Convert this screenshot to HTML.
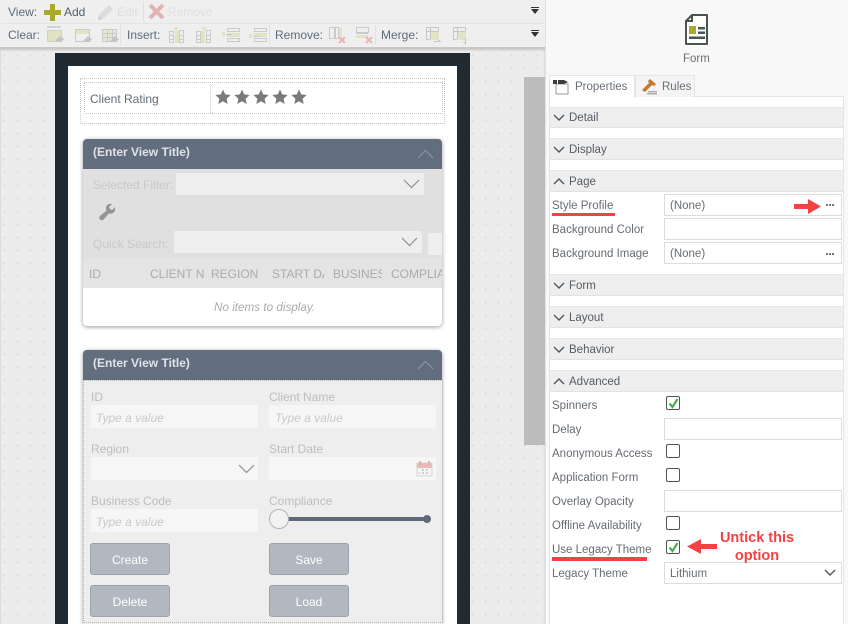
<!DOCTYPE html>
<html><head><meta charset="utf-8">
<style>
html,body{margin:0;padding:0;background:#f8f8f8}
#r{position:relative;width:848px;height:624px;overflow:hidden;font-family:"Liberation Sans",sans-serif;font-size:11.5px;color:#5e6670;background:#f8f8f8}
#r div,#r span.a,#r svg{position:absolute}
.t{white-space:nowrap;line-height:14px}
.sh{left:550px;width:293px;height:20px;background:#eeeeee;border-bottom:1px solid #e2e2e2;border-top:1px solid #e8e8e8}
.sl{left:569px;font-weight:normal;color:#555c64;font-size:11.5px}
.lab{left:552px;color:#666c73}
.inp{left:664px;width:176px;height:20px;background:#fff;border:1px solid #dcdcdc}
.cb{left:666px;width:12px;height:12px;border:1px solid #4f5558;border-radius:2px;background:#fff}
.gi{background:#f6f6f6;height:23px;width:167px}
.btn{width:78px;height:30px;background:#b2b8c0;border:1px solid #9ca3ad;border-radius:3px;color:#fff;text-align:center;line-height:33px;font-size:12px}
.fl{color:#bdbdbd;font-size:12px}
.ph{color:#c9c9c9;font-style:italic;font-size:12px}
.ch{color:#a8abaf;font-size:12px}
</style></head><body><div id="r">

<!-- toolbar -->
<div style="left:0;top:0;width:546px;height:47px;background:#efefef"></div>
<div style="left:2px;top:23px;width:544px;height:1px;background:#e4e4e4"></div>
<div class="t" style="left:8px;top:5px;color:#5b6b7c;font-size:12px">View:</div>
<svg style="left:44px;top:4px" width="17" height="17"><path d="M6 0h5v6h6v5h-6v6H6v-6H0V6h6z" fill="#a9a92c"/></svg>
<div class="t" style="left:64px;top:5px;color:#55606b;font-size:12px">Add</div>
<svg style="left:97px;top:4px" width="17" height="17"><path d="M1 16l1-5L12 1l4 4L6 15z" fill="#dcdcdc"/><path d="M1 16l1-4 3 3z" fill="#c8c8c8"/></svg>
<div class="t" style="left:117px;top:5px;color:#dedede;font-size:12px">Edit</div>
<div style="left:143px;top:2px;width:1px;height:20px;background:#e0e0e0"></div>
<svg style="left:148px;top:3px" width="17" height="17"><path d="M2 2l13 13M15 2L2 15" stroke="#e4b3b3" stroke-width="4"/></svg>
<div class="t" style="left:168px;top:5px;color:#e0e0e0;font-size:12px">Remove</div>
<svg style="left:530px;top:7px" width="11" height="8"><path d="M1 0h8v1H1zM1 2h8L5 7z" fill="#333"/></svg>
<svg style="left:530px;top:30px" width="11" height="8"><path d="M1 0h8v1H1zM1 2h8L5 7z" fill="#333"/></svg>

<div class="t" style="left:8px;top:28px;color:#5b6b7c;font-size:12px">Clear:</div>
<div class="t" style="left:127px;top:28px;color:#5b6b7c;font-size:12px">Insert:</div>
<div class="t" style="left:275px;top:28px;color:#5b6b7c;font-size:12px">Remove:</div>
<div class="t" style="left:381px;top:28px;color:#5b6b7c;font-size:12px">Merge:</div>
<div style="left:120px;top:25px;width:1px;height:20px;background:#e0e0e0"></div>
<div style="left:269px;top:25px;width:1px;height:20px;background:#e0e0e0"></div>
<div style="left:375px;top:25px;width:1px;height:20px;background:#e0e0e0"></div>

<svg style="left:46px;top:26px" width="370" height="19" fill="none">
<g><path d="M1 1h14" stroke="#d2d2d2" stroke-width="2"/><rect x="1.500" y="4.500" width="14" height="11" fill="#e2e2c4" stroke="#cfcfcf"/><path d="M9 15l5-5 4 3-3 3z" fill="#c4c4c4"/></g>
<g transform="translate(28)"><rect x="1.500" y="3.500" width="14" height="12" stroke="#cacaca" fill="#efefef"/><rect x="2" y="4" width="13" height="4" fill="#e2e2c4"/><path d="M9 15l5-5 4 3-3 3z" fill="#c4c4c4"/></g>
<g transform="translate(55)"><rect x="1.500" y="3.500" width="14" height="12" stroke="#cacaca" fill="#e8e8d0"/><path d="M1 7.500h14M1 11.500h14M6.500 3v12M11.500 3v12" stroke="#cacaca"/><path d="M9 15l5-5 4 3-3 3z" fill="#c4c4c4"/></g>
<g transform="translate(122)" stroke="#cacaca"><rect x="1.500" y="5.500" width="4" height="11" fill="#efefef"/><rect x="11.500" y="4.500" width="4" height="12" fill="#efefef"/><rect x="7" y="5" width="4" height="12" fill="#e2e2c4" stroke="none"/><rect x="6" y="1" width="4" height="3" fill="#e2e2c4" stroke="none"/><path d="M1 9.500h4M1 13.500h4M11 9.500h4M11 13.500h4"/></g>
<g transform="translate(149)" stroke="#cacaca"><rect x="1.500" y="5.500" width="4" height="11" fill="#efefef"/><rect x="11.500" y="4.500" width="4" height="12" fill="#efefef"/><rect x="6" y="5" width="4" height="12" fill="#e2e2c4" stroke="none"/><rect x="7" y="1" width="4" height="3" fill="#e2e2c4" stroke="none"/><path d="M1 9.500h4M1 13.500h4M11 9.500h4M11 13.500h4"/></g>
<g transform="translate(176)" stroke="#cacaca"><rect x="5.500" y="2.500" width="12" height="3" fill="#efefef"/><rect x="5.500" y="12.500" width="12" height="3" fill="#efefef"/><rect x="5" y="7" width="13" height="4" fill="#e2e2c4" stroke="none"/><rect x="0" y="6" width="3" height="4" fill="#e2e2c4" stroke="none"/><path d="M4 8.500h6"/></g>
<g transform="translate(203)" stroke="#cacaca"><rect x="5.500" y="2.500" width="12" height="3" fill="#efefef"/><rect x="5.500" y="12.500" width="12" height="3" fill="#efefef"/><rect x="5" y="7" width="13" height="4" fill="#e2e2c4" stroke="none"/><rect x="0" y="8" width="3" height="4" fill="#e2e2c4" stroke="none"/><path d="M4 10.500h6"/></g>
<g transform="translate(282)" stroke="#cacaca"><rect x="1.500" y="1.500" width="5" height="11" fill="#efefef"/><rect x="7.500" y="1.500" width="3" height="11" fill="#efefef"/><rect x="11" y="1" width="3" height="11" fill="#e2e2c4" stroke="none"/><path d="M11 11l6 6M17 11l-6 6" stroke="#eab4b4" stroke-width="2"/></g>
<g transform="translate(309)" stroke="#cacaca"><rect x="1.500" y="1.500" width="12" height="5" fill="#efefef"/><rect x="1" y="9" width="12" height="3" fill="#e2e2c4" stroke="none"/><path d="M1 7.500h12"/><path d="M11 11l6 6M17 11l-6 6" stroke="#eab4b4" stroke-width="2"/></g>
</svg>
<svg style="left:425px;top:26px" width="45" height="19" fill="none" stroke="#c6c6c6">
<rect x="1.500" y="1.500" width="12" height="12" fill="#efefef"/><rect x="5" y="5" width="9" height="9" fill="#e2e2c4" stroke="none"/><path d="M1 5.500h12M5.500 1v12"/><path d="M9 15.500h6l-2-2"/>
<rect x="28.500" y="1.500" width="12" height="12" fill="#efefef"/><rect x="32" y="5" width="9" height="9" fill="#e2e2c4" stroke="none"/><path d="M28 5.500h12M32.500 1v12"/><path d="M40.500 12v6l-2-2"/>
</svg>

<!-- canvas -->
<div id="cv" style="left:0;top:47px;width:545px;height:577px;background-color:#ececec;background-image:radial-gradient(circle,#dadada .8px,transparent 1px);background-size:13px 13px;background-position:-2px 1px;border-top:1px solid #c8c8c8;box-shadow:inset 0 2px 2px #c4c4c4"></div>
<div style="left:545px;top:0;width:1px;height:624px;background:#e2e2e2"></div>
<div style="left:524px;top:77px;width:21px;height:368px;background:#bcbcbc"></div>
<div style="left:55px;top:53px;width:415px;height:571px;background:#212b33"></div>
<div style="left:68px;top:66px;width:389px;height:558px;background:#fff"></div>

<!-- rating -->
<div style="left:80px;top:78px;width:363px;height:44px;border:1px dotted #c4c4c4"></div>
<div style="left:84px;top:82px;width:357px;height:30px;border:1px dotted #c4c4c4"></div>
<div style="left:210px;top:82px;width:0;height:31px;border-left:1px dotted #c4c4c4"></div>
<div class="t" style="left:90px;top:92px;color:#5f6c79;font-size:12px">Client Rating</div>
<svg style="left:215px;top:89px" width="95" height="16" fill="#7a7a7a">
<path d="M8 .5L10.200 5.400 15.600 6 11.600 9.700 12.700 15 8 12.300 3.300 15 4.400 9.700 .4 6 5.800 5.400z"/>
<path transform="translate(19)" d="M8 .5L10.200 5.400 15.600 6 11.600 9.700 12.700 15 8 12.300 3.300 15 4.400 9.700 .4 6 5.800 5.400z"/>
<path transform="translate(38)" d="M8 .5L10.200 5.400 15.600 6 11.600 9.700 12.700 15 8 12.300 3.300 15 4.400 9.700 .4 6 5.800 5.400z"/>
<path transform="translate(57)" d="M8 .5L10.200 5.400 15.600 6 11.600 9.700 12.700 15 8 12.300 3.300 15 4.400 9.700 .4 6 5.800 5.400z"/>
<path transform="translate(76)" d="M8 .5L10.200 5.400 15.600 6 11.600 9.700 12.700 15 8 12.300 3.300 15 4.400 9.700 .4 6 5.800 5.400z"/>
</svg>

<!-- view 1 -->
<div style="left:83px;top:139px;width:359px;height:187px;background:#fff;border-radius:4px;box-shadow:0 1px 4px rgba(0,0,0,.4)"></div>
<div style="left:83px;top:139px;width:359px;height:30px;background:#626d7e;border-radius:4px 4px 0 0"></div>
<div class="t" style="left:93px;top:145px;color:#dfe3e8;font-size:12px;font-weight:bold">(Enter View Title)</div>
<svg style="left:417px;top:148px" width="17" height="12" fill="none"><path d="M1 10l7.500-7.500L16 10" stroke="#8c95a2" stroke-width="1.200"/></svg>
<div style="left:83px;top:169px;width:359px;height:119px;background:#e0e0e0"></div>
<div style="left:83px;top:258px;width:359px;height:30px;background:#e4e4e4"></div>
<div class="t" style="left:93px;top:178px;color:#c9c9c9;font-size:12px;font-weight:normal">Selected Filter:</div>
<div style="left:176px;top:173px;width:248px;height:22px;background:#eeeeee"></div>
<svg style="left:403px;top:178px" width="17" height="12" fill="none"><path d="M1 2l7.500 7.500L16 2" stroke="#8f8f8f" stroke-width="1.200"/></svg>
<svg style="left:99px;top:204px" width="17" height="17"><path d="M16 3l-3 3-2-1-1-2 3-3c-3-1-6 1-6 4 0 1 0 1.500.5 2.500L1 12c-1 1-1 2.500 0 3.500s2.500 1 3.500 0L10 9.500c3 1 7-1 6-6.500z" fill="#949494"/></svg>
<div class="t" style="left:93px;top:237px;color:#c9c9c9;font-size:12px">Quick Search:</div>
<div style="left:174px;top:231px;width:248px;height:22px;background:#eeeeee"></div>
<svg style="left:401px;top:236px" width="17" height="12" fill="none"><path d="M1 2l7.500 7.500L16 2" stroke="#8f8f8f" stroke-width="1.200"/></svg>
<div style="left:428px;top:233px;width:14px;height:22px;background:#eeeeee"></div>
<div class="t ch" style="left:89px;top:267px">ID</div>
<div class="t ch" style="left:150px;top:267px;width:54px;overflow:hidden">CLIENT NAME</div>
<div class="t ch" style="left:211px;top:267px">REGION</div>
<div class="t ch" style="left:272px;top:267px;width:52px;overflow:hidden">START DATE</div>
<div class="t ch" style="left:333px;top:267px;width:49px;overflow:hidden">BUSINESS</div>
<div class="t ch" style="left:391px;top:267px;width:51px;overflow:hidden">COMPLIANCE</div>
<div class="t" style="left:214px;top:301px;color:#aaa;font-style:italic;font-size:11.700px">No items to display.</div>

<!-- view 2 -->
<div style="left:83px;top:350px;width:359px;height:274px;background:#eeeeee;box-shadow:0 1px 4px rgba(0,0,0,.4);border-radius:4px 4px 0 0"></div>
<div style="left:83px;top:350px;width:359px;height:30px;background:#626d7e;border-radius:4px 4px 0 0"></div>
<div style="left:83px;top:380px;width:358px;height:241px;border:1px dotted #b4b4b4"></div>
<div class="t" style="left:93px;top:356px;color:#dfe3e8;font-size:12px;font-weight:bold">(Enter View Title)</div>
<svg style="left:417px;top:359px" width="17" height="12" fill="none"><path d="M1 10l7.500-7.500L16 10" stroke="#8c95a2" stroke-width="1.200"/></svg>

<div class="t fl" style="left:91px;top:390px">ID</div>
<div class="t fl" style="left:269px;top:390px">Client Name</div>
<div class="gi" style="left:91px;top:405px"></div>
<div class="gi" style="left:269px;top:405px"></div>
<div class="t ph" style="left:96px;top:411px">Type a value</div>
<div class="t ph" style="left:275px;top:411px">Type a value</div>
<div class="t fl" style="left:91px;top:442px">Region</div>
<div class="t fl" style="left:269px;top:442px">Start Date</div>
<div class="gi" style="left:91px;top:457px"></div>
<div class="gi" style="left:269px;top:457px"></div>
<svg style="left:238px;top:463px" width="17" height="12" fill="none"><path d="M1 2l7.500 7.500L16 2" stroke="#8f8f8f" stroke-width="1.200"/></svg>
<svg style="left:416px;top:460px" width="17" height="17"><rect x="1" y="3" width="15" height="13" fill="#f4f4f4" stroke="#d5d5d5"/><rect x="1" y="3" width="15" height="5" fill="#e9bcbc"/><path d="M4 1v4M13 1v4" stroke="#d9a8a8" stroke-width="1.500"/><path d="M6 10h2M10 10h2M6 13h2M10 13h2M3 13h1" stroke="#aaa"/></svg>
<div class="t fl" style="left:91px;top:494px">Business Code</div>
<div class="t fl" style="left:269px;top:494px">Compliance</div>
<div class="gi" style="left:91px;top:509px"></div>
<div class="t ph" style="left:96px;top:515px">Type a value</div>
<div style="left:280px;top:517px;width:147px;height:4px;background:#5e6a7b;border-radius:2px"></div>
<div style="left:423px;top:515px;width:8px;height:8px;background:#5e6a7b;border-radius:50%"></div>
<div style="left:269px;top:509px;width:18px;height:18px;border-radius:50%;background:#f2f2f2;border:1px solid #b4b4b4"></div>
<div class="btn" style="left:90px;top:543px">Create</div>
<div class="btn" style="left:269px;top:543px">Save</div>
<div class="btn" style="left:90px;top:585px">Delete</div>
<div class="btn" style="left:269px;top:585px">Load</div>

<!-- right panel -->
<svg style="left:684px;top:14px" width="25" height="31"><path d="M8 1h15v29H2V7z" fill="#fff" stroke="#4a5356" stroke-width="2" stroke-linejoin="round"/><path d="M8 1v6H2" fill="none" stroke="#4a5356" stroke-width="2"/><rect x="5" y="12" width="7" height="8" fill="#a9a92c"/><path d="M14 13h7v2.500h-7zM14 17.500h7V20h-7zM5 22.500h16V25H5z" fill="#4a5356"/></svg>
<div class="t" style="left:683px;top:52px;color:#6a7078;font-size:11.500px">Form</div>

<div style="left:549px;top:96px;width:295px;height:528px;background:#fff;border:1px solid #e4e4e4;border-bottom:0;box-sizing:border-box"></div>
<div style="left:549px;top:75px;width:86px;height:23px;background:#fff;border:1px solid #e4e4e4;border-bottom:0;box-sizing:border-box"></div>
<div style="left:635px;top:75px;width:60px;height:22px;background:#f4f4f4;border:1px solid #e4e4e4;border-bottom:0;box-sizing:border-box"></div>
<svg style="left:553px;top:78px" width="18" height="17" fill="none"><path d="M3 6h12v10H3z" stroke="#9a9a9a"/><path d="M0 2h4v4H0zM5 2h6l4 2-4 2H5z" fill="#3a3f44"/></svg>
<svg style="left:641px;top:78px" width="17" height="17"><path d="M9 1l6 5-2 2-2-1-7 7-3-2 7-7-1-2z" fill="#c47a2c"/><path d="M7 13h9v1.500H7zM6 15h10v1.500H6z" fill="#b0b0b0"/></svg>
<div class="t" style="left:575px;top:80px;color:#6a7078;font-size:11.500px">Properties</div>
<div class="t" style="left:662px;top:80px;color:#6a7078;font-size:11.500px">Rules</div>

<!-- section headers -->
<div class="sh" style="top:107px;height:19px"></div><div class="sh" style="top:138px"></div><div class="sh" style="top:170px"></div>
<div class="sh" style="top:274px"></div><div class="sh" style="top:306px"></div><div class="sh" style="top:338px"></div><div class="sh" style="top:370px"></div>
<div class="t sl" style="top:111px">Detail</div>
<div class="t sl" style="top:143px">Display</div>
<div class="t sl" style="top:175px">Page</div>
<div class="t sl" style="top:279px">Form</div>
<div class="t sl" style="top:311px">Layout</div>
<div class="t sl" style="top:343px">Behavior</div>
<div class="t sl" style="top:375px">Advanced</div>
<svg style="left:553px;top:113px" width="12" height="280" fill="none" stroke="#4f5558" stroke-width="1.400">
<path d="M1 2l5 5 5-5"/>
<path d="M1 34l5 5 5-5"/>
<path d="M1 71l5-5 5 5"/>
<path d="M1 170l5 5 5-5"/>
<path d="M1 202l5 5 5-5"/>
<path d="M1 234l5 5 5-5"/>
<path d="M1 271l5-5 5 5"/>
</svg>

<!-- rows -->
<div class="t lab" style="top:199px">Style Profile</div>
<div class="t lab" style="top:223px">Background Color</div>
<div class="t lab" style="top:247px">Background Image</div>
<div class="inp" style="top:194px"></div>
<div class="inp" style="top:218px"></div>
<div class="inp" style="top:242px"></div>
<div class="t" style="left:670px;top:199px;color:#666c73">(None)</div>
<div class="t" style="left:670px;top:247px;color:#666c73">(None)</div>
<div style="left:826px;top:204px;width:8px;height:2px;background:repeating-linear-gradient(90deg,#777 0 2px,transparent 2px 3px)"></div>
<div style="left:826px;top:253px;width:8px;height:2px;background:repeating-linear-gradient(90deg,#777 0 2px,transparent 2px 3px)"></div>
<div style="left:552px;top:213px;width:63px;height:3px;background:#f44141"></div>
<svg style="left:794px;top:199px" width="28" height="16"><path d="M0 5h14V0l13 7.500L14 15v-5H0z" fill="#f44141"/></svg>

<div class="t lab" style="top:399px">Spinners</div>
<div class="t lab" style="top:423px">Delay</div>
<div class="t lab" style="top:447px">Anonymous Access</div>
<div class="t lab" style="top:471px">Application Form</div>
<div class="t lab" style="top:495px">Overlay Opacity</div>
<div class="t lab" style="top:519px">Offline Availability</div>
<div class="t lab" style="top:543px">Use Legacy Theme</div>
<div class="t lab" style="top:567px">Legacy Theme</div>
<div class="cb" style="top:396px"></div>
<div class="inp" style="top:418px"></div>
<div class="cb" style="top:444px"></div>
<div class="cb" style="top:468px"></div>
<div class="inp" style="top:490px"></div>
<div class="cb" style="top:516px"></div>
<div class="cb" style="top:540px"></div>
<div class="inp" style="top:562px"></div>
<svg style="left:668px;top:398px" width="11" height="11" fill="none"><path d="M1.500 5.500l3 3.500 5-8" stroke="#4caf50" stroke-width="2.200"/></svg>
<svg style="left:668px;top:542px" width="11" height="11" fill="none"><path d="M1.500 5.500l3 3.500 5-8" stroke="#4caf50" stroke-width="2.200"/></svg>
<div class="t" style="left:670px;top:567px;color:#666c73">Lithium</div>
<svg style="left:824px;top:569px" width="12" height="8" fill="none"><path d="M1 1l5 5 5-5" stroke="#4f5558" stroke-width="1.400"/></svg>
<div style="left:552px;top:557px;width:95px;height:4px;background:#f44141"></div>
<svg style="left:687px;top:539px" width="30" height="16"><path d="M30 5H14V0L0 7.500 14 15v-5h16z" fill="#f44141"/></svg>
<div style="left:708px;top:529px;width:98px;text-align:center;color:#f44141;font-weight:bold;font-size:14.500px;line-height:18px">Untick this<br>option</div>
</div></body></html>
